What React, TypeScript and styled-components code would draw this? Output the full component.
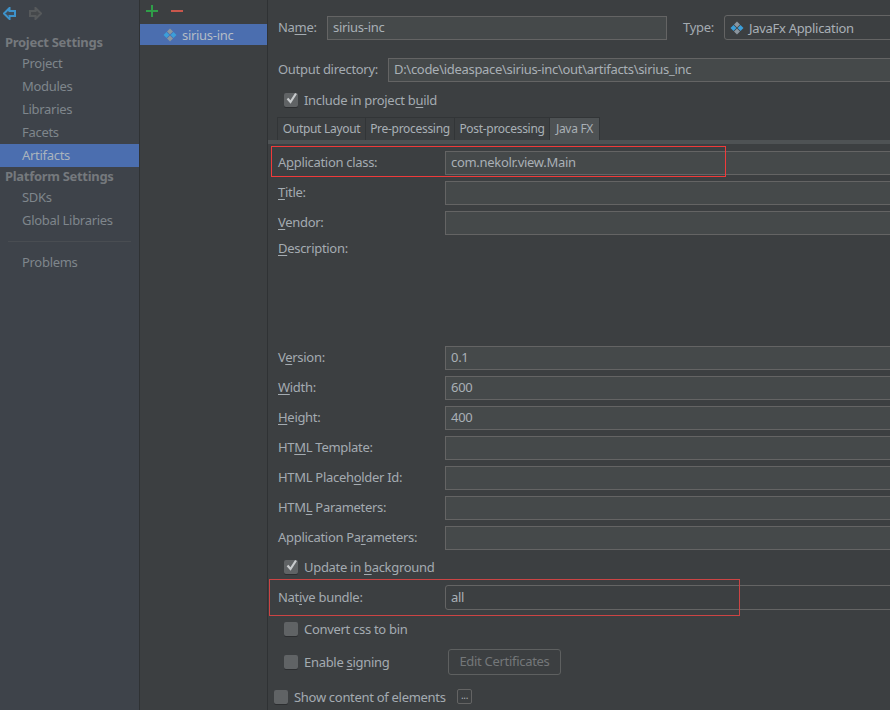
import React from "react";
import styled, { createGlobalStyle } from "styled-components";

const Global = createGlobalStyle`
    html, body { margin: 0; padding: 0; background: #3c3f41; }
    body { font-family: "Noto Sans", "Liberation Sans", sans-serif; font-size: 13px; letter-spacing: -0.3px; color: #a9b0b6; }
    u { text-underline-offset: 2px; text-decoration-thickness: 1px; }
`;

const Window = styled.div`
    display: grid;
    grid-template-columns: 139px 129px 1fr;
    width: 890px;
    height: 710px;
    overflow: hidden;
    position: relative;
    background: #3c3f41;
`;

const Sidebar = styled.nav`
    background: #3e434a;
    border-right: 1px solid #2f3234;
    width: 139px;
    box-sizing: content-box;
`;

const NavBar = styled.div`
    height: 33px;
    padding: 0 0 0 3px;
    display: flex;
    align-items: flex-start;
    gap: 13px;
    svg { margin-top: 7px; }
`;

const SectionTitle = styled.div`
    height: 19px;
    line-height: 19px;
    padding-left: 5px;
    font-weight: 700;
    color: #75797d;
`;

const NavItem = styled.div<{ $active?: boolean }>`
    height: 23px;
    line-height: 23px;
    padding-left: 22px;
    color: ${(p) => (p.$active ? "#a9b3bd" : "#7f868c")};
    background: ${(p) => (p.$active ? "#4b6eaf" : "transparent")};
`;

const NavSeparator = styled.div`
    height: 1px;
    margin: 9px 8px;
    background: #494d52;
`;

const ListColumn = styled.div`
    border-right: 1px solid #2f3234;
    margin-left: 1px;
`;

const ListTools = styled.div`
    height: 24px;
    display: flex;
    gap: 13px;
    padding: 5px 0 0 6px;
    box-sizing: border-box;
    svg { display: block; }
`;

const ListItem = styled.div`
    height: 21px;
    display: flex;
    align-items: center;
    gap: 5px;
    padding-left: 23px;
    background: #4b6eaf;
    color: #b4bcc6;
`;

const Panel = styled.main`
    padding: 15px 0 0 10px;
    min-width: 0;
`;

const HeaderRow = styled.div`
    display: flex;
    align-items: center;
    height: 25px;
`;

const Label = styled.label<{ $width?: number }>`
    flex: none;
    width: ${(p) => p.$width ?? 167}px;
    padding-bottom: 2px;
    color: #a4abb1;
    white-space: nowrap;
`;

const Field = styled.div<{ $round?: boolean; $tall?: boolean }>`
    flex: 1;
    min-width: 0;
    height: ${(p) => (p.$tall ? 25 : 24)}px;
    line-height: ${(p) => (p.$tall ? 22 : 20)}px;
    box-sizing: border-box;
    padding: 0 5px;
    margin-right: -4px;
    white-space: nowrap;
    overflow: hidden;
    background: ${(p) => (p.$round ? "transparent" : "#45494a")};
    border: 1px solid #646464;
    border-radius: ${(p) => (p.$round ? 3 : 0)}px;
    color: #a9b0b6;
`;

const NameField = styled(Field)`
    flex: none;
    width: 340px;
    margin-right: 16px;
`;

const TypeField = styled(Field)`
    display: flex;
    align-items: center;
    gap: 5px;
    height: 25px;
`;

const FormRow = styled.div<{ $top?: number; $tall?: boolean }>`
    display: flex;
    align-items: center;
    height: ${(p) => (p.$tall ? 25 : 24)}px;
    margin-top: ${(p) => p.$top ?? 6}px;
`;

const DescriptionRow = styled.div`
    height: 99px;
    margin-top: 6px;
    line-height: 15px;
    color: #a4abb1;
`;

const CheckRow = styled.div<{ $top?: number; $indent?: number; $height?: number }>`
    display: flex;
    align-items: center;
    gap: 6px;
    height: ${(p) => p.$height ?? 24}px;
    margin-top: ${(p) => p.$top ?? 6}px;
    margin-left: ${(p) => p.$indent ?? 6}px;
    color: #a4abb1;
`;

const CheckText = styled.span<{ $width?: number }>`
    ${(p) => (p.$width ? `width: ${p.$width}px; flex: none;` : "")}
    white-space: nowrap;
`;

const Check = styled.span`
    flex: none;
    width: 14px;
    height: 14px;
    border-radius: 2px;
    background: #606365;
    box-shadow: 0 1px 0 #2c2e30;
    position: relative;
    svg { position: absolute; left: 1px; top: -2px; }
`;

const TabStrip = styled.div`
    display: flex;
    height: 23px;
    margin: 5px 0 0 -1px;
`;

const Tab = styled.div<{ $width: number; $active?: boolean }>`
    width: ${(p) => p.$width}px;
    box-sizing: border-box;
    text-align: center;
    line-height: 22px;
    border-left: 1px solid #323537;
    border-top: 1px solid #323537;
    color: #a9b0b6;
    font-size: 12px;
    white-space: nowrap;
    background: ${(p) => (p.$active ? "#4e5254" : "transparent")};
    &:last-child { border-right: 1px solid #323537; }
`;

const TabRule = styled.div`
    height: 4px;
    margin-left: -10px;
    background: #4e5254;
`;

const EditButton = styled.div`
    width: 113px;
    height: 26px;
    line-height: 23px;
    box-sizing: border-box;
    text-align: center;
    border: 1px solid #5e6060;
    border-radius: 3px;
    color: #747779;
`;

const DotsButton = styled.div`
    width: 15px;
    height: 15px;
    line-height: 11px;
    box-sizing: border-box;
    text-align: center;
    font-size: 10px;
    border: 1px solid #646464;
    border-radius: 2px;
    color: #a9b0b6;
`;

const Callout = styled.div<{ $x: number; $y: number; $w: number; $h: number; $color: string }>`
    position: absolute;
    left: ${(p) => p.$x}px;
    top: ${(p) => p.$y}px;
    width: ${(p) => p.$w}px;
    height: ${(p) => p.$h}px;
    box-sizing: border-box;
    border: 1px solid ${(p) => p.$color};
    pointer-events: none;
`;

function ArrowLeft() {
    return (
        <svg width="13" height="13" viewBox="0 0 13 13">
            <path d="M6.5 1 L1 6.5 L6.5 12 V9 H12 V4 H6.5 Z" fill="#3e4d5c" stroke="#3d93cc" strokeWidth="2" />
        </svg>
    );
}

function ArrowRight() {
    return (
        <svg width="13" height="13" viewBox="0 0 13 13">
            <path d="M6.5 1 L12 6.5 L6.5 12 V9 H1 V4 H6.5 Z" fill="#45484b" stroke="#56595b" strokeWidth="2" />
        </svg>
    );
}

function PlusIcon() {
    return (
        <svg width="12" height="12" viewBox="0 0 12 12">
            <path d="M5 0h2v5h5v2H7v5H5V7H0V5h5z" fill="#2f9e48" />
        </svg>
    );
}

function MinusIcon() {
    return (
        <svg width="12" height="12" viewBox="0 0 12 12">
            <rect x="0" y="5" width="12" height="2" fill="#c9574c" />
        </svg>
    );
}

function ArtifactIcon() {
    return (
        <svg width="14" height="14" viewBox="0 0 14 14" style={{ flex: "none" }}>
            <path d="M7 0.5 L10 3.5 L7 6.5 L4 3.5 Z" fill="#8b969f" />
            <path d="M7 7.5 L10 10.5 L7 13.5 L4 10.5 Z" fill="#8b969f" />
            <path d="M3.5 4 L6.5 7 L3.5 10 L0.5 7 Z" fill="#3c9fd9" />
            <path d="M10.5 4 L13.5 7 L10.5 10 L7.5 7 Z" fill="#3c9fd9" />
        </svg>
    );
}

function Tick() {
    return (
        <svg width="13" height="14" viewBox="0 0 13 14">
            <path d="M2.5 7.5 L5.5 11 L11 2.5" fill="none" stroke="#c8cbcd" strokeWidth="2.2" />
        </svg>
    );
}

export default function App() {
    return (
        <Window>
            <Global />
            <Sidebar>
                <NavBar>
                    <ArrowLeft />
                    <ArrowRight />
                </NavBar>
                <SectionTitle>Project Settings</SectionTitle>
                <NavItem>Project</NavItem>
                <NavItem>Modules</NavItem>
                <NavItem>Libraries</NavItem>
                <NavItem>Facets</NavItem>
                <NavItem $active>Artifacts</NavItem>
                <SectionTitle>Platform Settings</SectionTitle>
                <NavItem>SDKs</NavItem>
                <NavItem>Global Libraries</NavItem>
                <NavSeparator />
                <NavItem>Problems</NavItem>
            </Sidebar>
            <ListColumn>
                <ListTools>
                    <PlusIcon />
                    <MinusIcon />
                </ListTools>
                <ListItem>
                    <ArtifactIcon />
                    sirius-inc
                </ListItem>
            </ListColumn>
            <Panel>
                <HeaderRow>
                    <Label $width={49}>Na<u>m</u>e:</Label>
                    <NameField>sirius-inc</NameField>
                    <Label $width={41}>Type:</Label>
                    <TypeField $round>
                        <ArtifactIcon />
                        JavaFx Application
                    </TypeField>
                </HeaderRow>
                <FormRow $top={18}>
                    <Label $width={110}>Output directory:</Label>
                    <Field>D:\code\ideaspace\sirius-inc\out\artifacts\sirius_inc</Field>
                </FormRow>
                <CheckRow>
                    <Check><Tick /></Check>
                    <CheckText>Include in project b<u>u</u>ild</CheckText>
                </CheckRow>
                <TabStrip>
                    <Tab $width={88}>Output Layout</Tab>
                    <Tab $width={89}>Pre-processing</Tab>
                    <Tab $width={95}>Post-processing</Tab>
                    <Tab $width={51} $active>Java FX</Tab>
                </TabStrip>
                <TabRule />
                <FormRow $top={7}>
                    <Label>A<u>p</u>plication class:</Label>
                    <Field>com.nekolr.view.Main</Field>
                </FormRow>
                <FormRow>
                    <Label><u>T</u>itle:</Label>
                    <Field />
                </FormRow>
                <FormRow>
                    <Label><u>V</u>endor:</Label>
                    <Field />
                </FormRow>
                <DescriptionRow><u>D</u>escription:</DescriptionRow>
                <FormRow $top={6}>
                    <Label>V<u>e</u>rsion:</Label>
                    <Field>0.1</Field>
                </FormRow>
                <FormRow>
                    <Label><u>W</u>idth:</Label>
                    <Field>600</Field>
                </FormRow>
                <FormRow>
                    <Label><u>H</u>eight:</Label>
                    <Field>400</Field>
                </FormRow>
                <FormRow>
                    <Label>HT<u>M</u>L Template:</Label>
                    <Field />
                </FormRow>
                <FormRow>
                    <Label>HTML Placeh<u>o</u>lder Id:</Label>
                    <Field />
                </FormRow>
                <FormRow>
                    <Label>HTM<u>L</u> Parameters:</Label>
                    <Field />
                </FormRow>
                <FormRow>
                    <Label>Application Pa<u>r</u>ameters:</Label>
                    <Field />
                </FormRow>
                <CheckRow $top={5}>
                    <Check><Tick /></Check>
                    <CheckText>Update in <u>b</u>ackground</CheckText>
                </CheckRow>
                <FormRow $tall>
                    <Label>Nat<u>i</u>ve bundle:</Label>
                    <Field $round $tall>all</Field>
                </FormRow>
                <CheckRow $top={7}>
                    <Check />
                    <CheckText>Convert css to bin</CheckText>
                </CheckRow>
                <CheckRow $top={8} $height={26}>
                    <Check />
                    <CheckText $width={138}>Enable <u>s</u>igning</CheckText>
                    <EditButton>Edit Certificates</EditButton>
                </CheckRow>
                <CheckRow $top={10} $indent={-4} $height={23}>
                    <Check />
                    <CheckText $width={157}>Show content of elements</CheckText>
                    <DotsButton>...</DotsButton>
                </CheckRow>
            </Panel>
            <Callout $x={271} $y={146} $w={455} $h={31} $color="#f03a3a" />
            <Callout $x={269} $y={579} $w={471} $h={37} $color="#cc4444" />
        </Window>
    );
}
